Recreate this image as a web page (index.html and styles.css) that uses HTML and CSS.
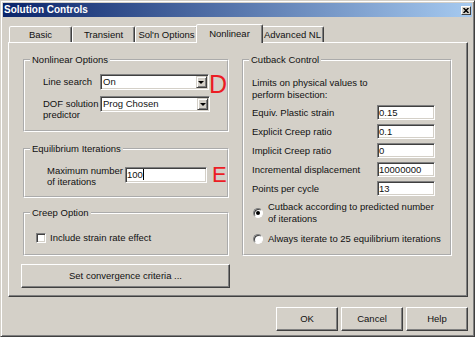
FILE: index.html
```html
<!DOCTYPE html>
<html lang="en">
<head>
  <meta charset="UTF-8">
  <meta name="viewport" content="width=device-width, initial-scale=1.0">
  <title>Solution Controls</title>
  <link rel="stylesheet" href="styles.css">
</head>
<body>
  <div class="window">
    <div class="titlebar">
      <span class="title">Solution Controls</span>
      <span class="close-btn">
        <svg width="6" height="5" viewBox="0 0 6 5"><path d="M0.5 0 L5.5 5 M5.5 0 L0.5 5" stroke="#000" stroke-width="1.5"/></svg>
      </span>
    </div>

    <div class="content">
      <div class="tabs">
        <div class="tab">Basic</div>
        <div class="tab">Transient</div>
        <div class="tab">Sol'n Options</div>
        <div class="tab active">Nonlinear</div>
        <div class="tab">Advanced NL</div>
      </div>

      <div class="panel">
        <div class="col col-left">
          <fieldset class="group">
            <legend>Nonlinear Options</legend>
            <div class="group-body nonlinear">
              <div class="field-row">
                <label class="field-label">Line search</label>
                <div class="select"><span>On</span><span class="select-btn"></span></div>
                <span class="mark mark-d">D</span>
              </div>
              <div class="field-row two-line">
                <label class="field-label">DOF solution predictor</label>
                <div class="select"><span>Prog Chosen</span><span class="select-btn"></span></div>
              </div>
            </div>
          </fieldset>

          <fieldset class="group equilibrium">
            <legend>Equilibrium Iterations</legend>
            <div class="group-body">
              <div class="field-row two-line">
                <label class="field-label">Maximum number of iterations</label>
                <div class="textbox iter-box">100<span class="caret"></span></div>
                <span class="mark mark-e">E</span>
              </div>
            </div>
          </fieldset>

          <fieldset class="group creep">
            <legend>Creep Option</legend>
            <div class="group-body">
              <label class="check"><span class="checkbox"></span>Include strain rate effect</label>
            </div>
          </fieldset>

          <div class="button wide-button">Set convergence criteria ...</div>
        </div>

        <div class="col col-right">
          <fieldset class="group cutback">
            <legend>Cutback Control</legend>
            <div class="group-body">
              <p class="intro">Limits on physical values to<br>perform bisection:</p>
              <div class="limit-row"><span class="limit-label">Equiv. Plastic strain</span><div class="textbox limit-box">0.15</div></div>
              <div class="limit-row"><span class="limit-label">Explicit Creep ratio</span><div class="textbox limit-box">0.1</div></div>
              <div class="limit-row"><span class="limit-label">Implicit Creep ratio</span><div class="textbox limit-box">0</div></div>
              <div class="limit-row"><span class="limit-label">Incremental displacement</span><div class="textbox limit-box">10000000</div></div>
              <div class="limit-row"><span class="limit-label">Points per cycle</span><div class="textbox limit-box">13</div></div>
              <label class="radio"><span class="radio-dot checked"></span><span>Cutback according to predicted number<br>of iterations</span></label>
              <label class="radio"><span class="radio-dot"></span><span>Always iterate to 25 equilibrium iterations</span></label>
            </div>
          </fieldset>
        </div>
      </div>

      <div class="actions">
        <div class="button">OK</div>
        <div class="button">Cancel</div>
        <div class="button">Help</div>
      </div>
    </div>
  </div>
</body>
</html>
```

FILE: styles.css
```css
body {
  margin: 0;
  font-family: "Liberation Sans", Arial, sans-serif;
  font-size: 9.5px;
  line-height: 12px;
  color: #111;
  background: #d4d0c8;
}

.window {
  width: 475px;
  height: 337px;
  box-sizing: border-box;
  padding: 2px;
  background: #d4d0c8;
  border: 1px solid;
  border-color: #d4d0c8 #404040 #404040 #d4d0c8;
  box-shadow: inset 1px 1px #fff, inset -1px -1px #808080;
}

.titlebar {
  height: 14px;
  display: flex;
  align-items: center;
  justify-content: space-between;
  padding: 0 1px;
  background: linear-gradient(to right, #0a246a, #a6caf0);
}

.title {
  color: #fff;
  font-weight: bold;
  font-size: 10px;
}

.close-btn {
  width: 10px;
  height: 9px;
  box-sizing: border-box;
  display: flex;
  align-items: center;
  justify-content: center;
  background: #d4d0c8;
  border: 1px solid;
  border-color: #fff #404040 #404040 #fff;
}

.content {
  padding: 7px 4px 0 5px;
}

/* tabs */
.tabs {
  display: flex;
  align-items: flex-end;
  height: 18px;
  padding-left: 1px;
}

.tab {
  width: 63px;
  height: 16px;
  box-sizing: border-box;
  display: flex;
  align-items: center;
  justify-content: center;
  background: #d4d0c8;
  border: 1px solid;
  border-bottom: none;
  border-color: #fff #404040 transparent #fff;
  border-radius: 2px 2px 0 0;
  box-shadow: inset -1px 0 #808080;
}

.tab.active {
  width: 67px;
  height: 19px;
  margin: 0 -2px -1px;
  padding-bottom: 1px;
  position: relative;
  z-index: 1;
}

.panel {
  width: 460px;
  height: 255px;
  box-sizing: border-box;
  display: flex;
  gap: 13px;
  padding: 11px 0 0 14px;
  border: 1px solid;
  border-color: #fff #404040 #404040 #fff;
  box-shadow: inset -1px -1px #808080;
}

.col {
  display: flex;
  flex-direction: column;
}

.col-left {
  width: 206px;
}

.col-right {
  width: 210px;
}

/* group boxes */
.group {
  margin: 0;
  padding: 0;
  min-width: 0;
  border: 2px groove #fff;
}

.group legend {
  margin-left: 5px;
  padding: 0 2px;
  line-height: 12px;
}

.nonlinear {
  padding: 8px 0 10px 18px;
}

.equilibrium {
  margin-top: 11px;
}

.equilibrium .group-body {
  padding: 10px 0 9px 22px;
}

.creep {
  margin-top: 9px;
}

.creep .group-body {
  padding: 13px 0 10px 11px;
}

.cutback .group-body {
  padding: 11px 0 9px 8px;
}

.field-row {
  display: flex;
  align-items: flex-start;
}

.field-row + .field-row {
  margin-top: 4px;
}

.field-label {
  width: 57px;
  line-height: 16px;
  flex: none;
}

.two-line .field-label {
  line-height: 11px;
  padding-top: 2px;
}

.equilibrium .field-label {
  width: 78px;
  padding-top: 0;
}

.select {
  width: 110px;
  height: 16px;
  box-sizing: border-box;
  display: flex;
  align-items: center;
  justify-content: space-between;
  padding: 1px 1px 1px 2px;
  background: #fff;
  border: 1px solid;
  border-color: #808080 #fff #fff #808080;
  box-shadow: inset 1px 1px #404040, inset -1px -1px #d4d0c8;
}

.select-btn {
  width: 11px;
  height: 12px;
  box-sizing: border-box;
  display: flex;
  align-items: center;
  justify-content: center;
  background: #d4d0c8;
  border: 1px solid;
  border-color: #d4d0c8 #404040 #404040 #d4d0c8;
  box-shadow: inset 1px 1px #fff, inset -1px -1px #808080;
}

.select-btn::after {
  content: "";
  border-left: 3px solid transparent;
  border-right: 3px solid transparent;
  border-top: 3px solid #000;
}

.textbox {
  box-sizing: border-box;
  padding: 0 1px;
  background: #fff;
  border: 1px solid;
  border-color: #808080 #fff #fff #808080;
  box-shadow: inset 1px 1px #404040, inset -1px -1px #d4d0c8;
  white-space: nowrap;
}

.iter-box {
  width: 82px;
  height: 16px;
  line-height: 14px;
  margin-top: 2px;
}

.caret {
  display: inline-block;
  width: 1px;
  height: 11px;
  background: #000;
  vertical-align: -2px;
}

.mark {
  color: #ec1c24;
  line-height: 16px;
  flex: none;
}

.mark-d {
  font-size: 25px;
  margin-top: 2px;
}

.mark-e {
  font-size: 22px;
  margin: 2px 0 0 5px;
}

.check {
  display: flex;
  align-items: center;
}

.checkbox {
  width: 10px;
  height: 10px;
  box-sizing: border-box;
  margin-right: 4px;
  background: #fff;
  border: 1px solid;
  border-color: #808080 #fff #fff #808080;
  box-shadow: inset 1px 1px #404040, inset -1px -1px #d4d0c8;
}

.wide-button {
  margin: 8px 0 0 -2px;
  width: 209px;
  height: 20px;
}

/* cutback control */
.intro {
  margin: 0;
}

.limit-row {
  display: flex;
  align-items: center;
  height: 15px;
  margin-top: 4px;
}

.limit-label {
  width: 125px;
}

.limit-box {
  width: 58px;
  height: 15px;
  line-height: 13px;
}

.radio {
  display: flex;
  align-items: center;
  margin-top: 5px;
}

.radio + .radio {
  margin-top: 8px;
}

.radio-dot {
  width: 10px;
  height: 10px;
  box-sizing: border-box;
  flex: none;
  display: flex;
  align-items: center;
  justify-content: center;
  margin: 0 5px 0 1px;
  border-radius: 50%;
  background: #fff;
  border: 1px solid;
  border-color: #808080 #fff #fff #808080;
  box-shadow: inset 1px 1px #404040;
}

.radio-dot.checked::after {
  content: "";
  width: 4px;
  height: 4px;
  border-radius: 50%;
  background: #000;
}

/* buttons */
.button {
  height: 24px;
  box-sizing: border-box;
  display: flex;
  align-items: center;
  justify-content: center;
  background: #d4d0c8;
  border: 1px solid;
  border-color: #fff #404040 #404040 #fff;
  box-shadow: inset -1px -1px #808080;
}

.actions {
  width: 460px;
  display: flex;
  justify-content: flex-end;
  gap: 3px;
  margin-top: 10px;
}

.actions .button {
  width: 62px;
}
```
